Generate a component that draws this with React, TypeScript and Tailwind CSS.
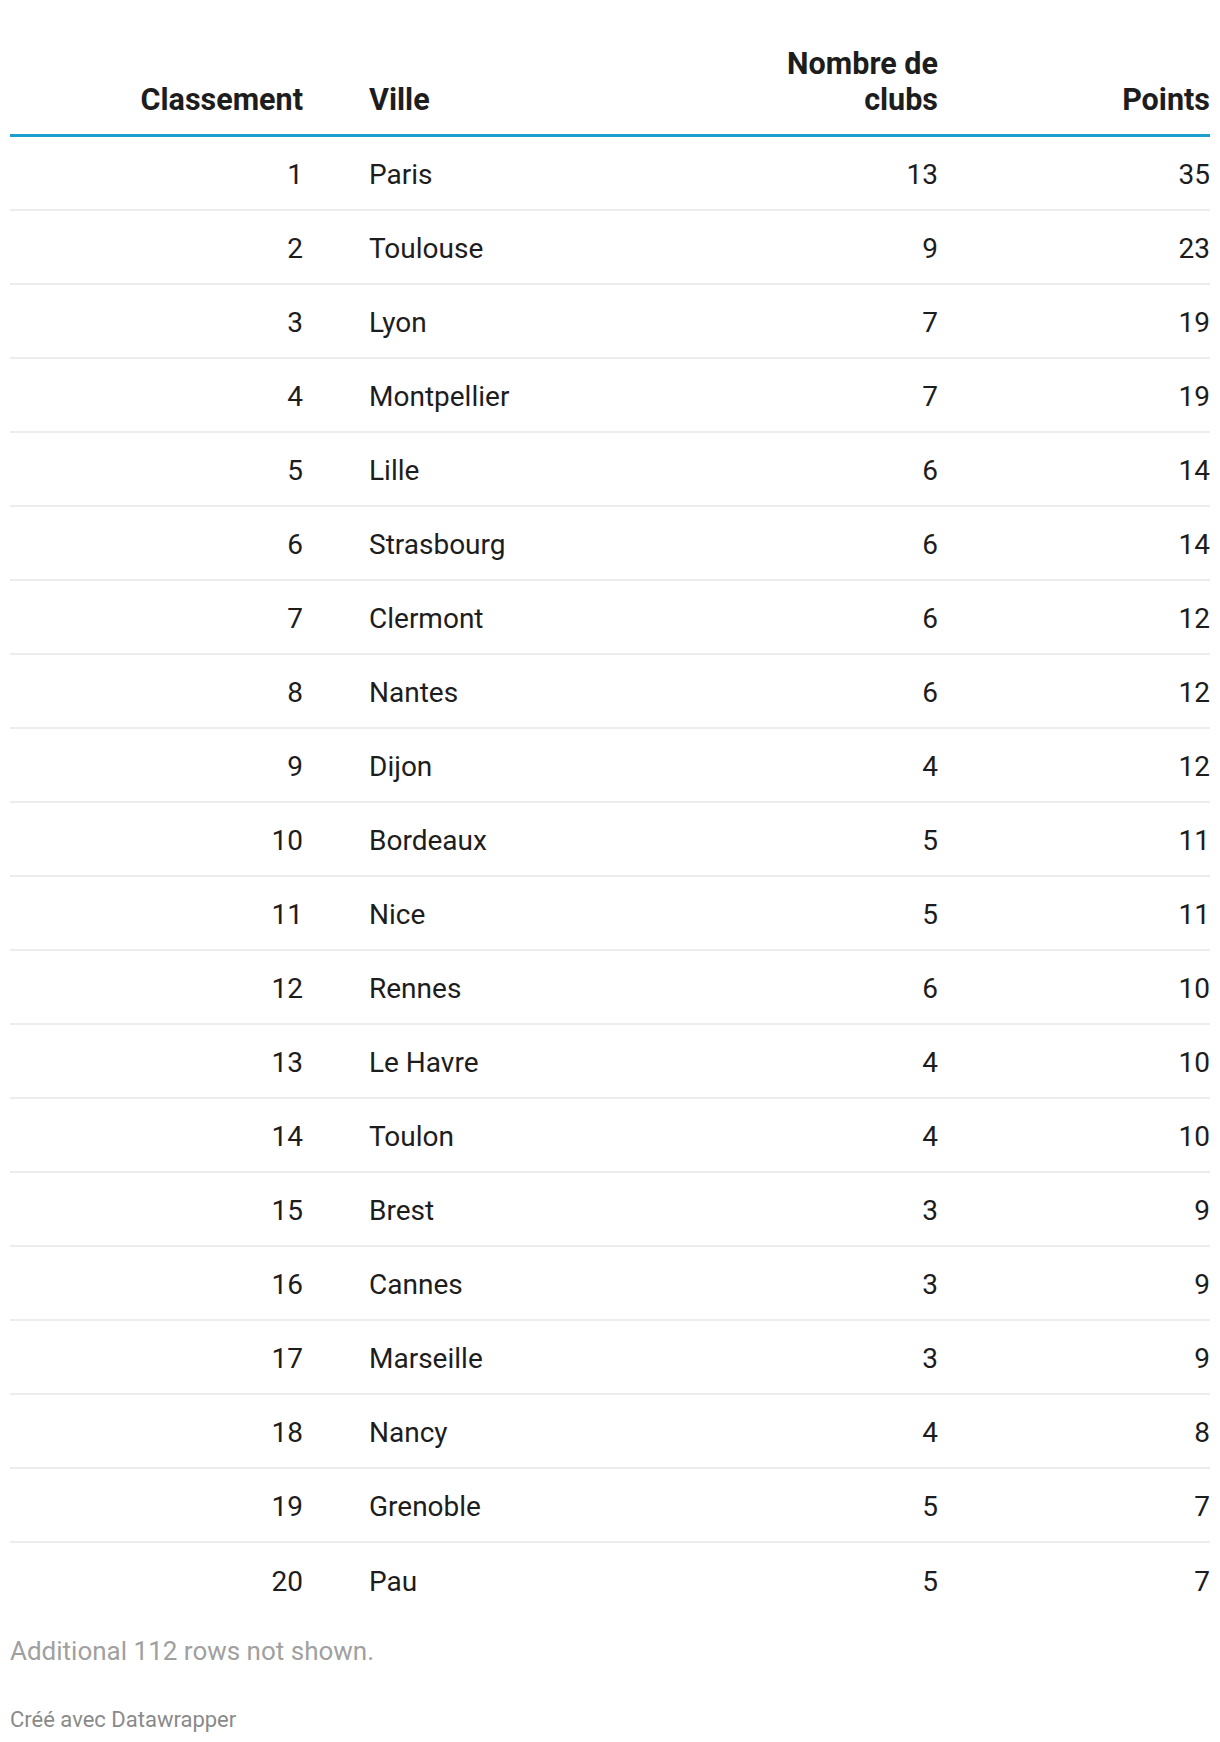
import React from 'react';

const rows: [number, string, number, number][] = [
  [1, 'Paris', 13, 35],
  [2, 'Toulouse', 9, 23],
  [3, 'Lyon', 7, 19],
  [4, 'Montpellier', 7, 19],
  [5, 'Lille', 6, 14],
  [6, 'Strasbourg', 6, 14],
  [7, 'Clermont', 6, 12],
  [8, 'Nantes', 6, 12],
  [9, 'Dijon', 4, 12],
  [10, 'Bordeaux', 5, 11],
  [11, 'Nice', 5, 11],
  [12, 'Rennes', 6, 10],
  [13, 'Le Havre', 4, 10],
  [14, 'Toulon', 4, 10],
  [15, 'Brest', 3, 9],
  [16, 'Cannes', 3, 9],
  [17, 'Marseille', 3, 9],
  [18, 'Nancy', 4, 8],
  [19, 'Grenoble', 5, 7],
  [20, 'Pau', 5, 7],
];

const grid = 'grid grid-cols-[293px_335px_300px_272px]';

export default function App() {
  return (
    <div className="min-h-screen bg-white px-[10px] pt-[46px] font-['Roboto',sans-serif] text-[#1d1d1d]">
      {/* Header */}
      <div className={`${grid} items-end border-b-[3px] border-[#1d9fcd] pb-[16px] text-[30.5px] font-bold leading-[36px]`}>
        <div className="text-right">Classement</div>
        <div className="pl-[66px]">Ville</div>
        <div className="text-right">
          Nombre de
          <br />
          clubs
        </div>
        <div className="text-right">Points</div>
      </div>

      {/* Rows */}
      <div className="text-[28px]">
        {rows.map(([rank, city, clubs, points], i) => (
          <div
            key={rank}
            className={`${grid} h-[74px] items-center pt-[3px] ${i < rows.length - 1 ? 'border-b-2 border-[#ececec]' : ''}`}
          >
            <div className="text-right">{rank}</div>
            <div className="pl-[66px]">{city}</div>
            <div className="text-right">{clubs}</div>
            <div className="text-right">{points}</div>
          </div>
        ))}
      </div>

      <div className="pt-[17px] text-[26px] leading-[34px] text-[#a0a0a0]">Additional 112 rows not shown.</div>
      <div className="pt-[37px] text-[22px] leading-[30px] text-[#8a8a8a]">Créé avec Datawrapper</div>
    </div>
  );
}
